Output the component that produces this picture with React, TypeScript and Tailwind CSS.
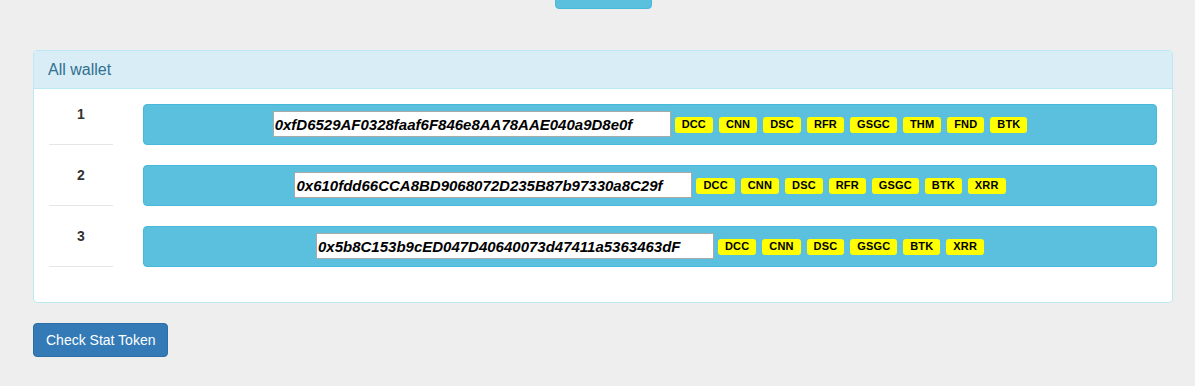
import React from 'react'

const wallets = [
  {
    address: '0xfD6529AF0328faaf6F846e8AA78AAE040a9D8e0f',
    tokens: ['DCC', 'CNN', 'DSC', 'RFR', 'GSGC', 'THM', 'FND', 'BTK'],
  },
  {
    address: '0x610fdd66CCA8BD9068072D235B87b97330a8C29f',
    tokens: ['DCC', 'CNN', 'DSC', 'RFR', 'GSGC', 'BTK', 'XRR'],
  },
  {
    address: '0x5b8C153b9cED047D40640073d47411a5363463dF',
    tokens: ['DCC', 'CNN', 'DSC', 'GSGC', 'BTK', 'XRR'],
  },
]

export default function App() {
  return (
    <div className="min-h-screen bg-[#eeeeee] font-['Liberation_Sans',Arial,sans-serif] text-[14px] text-[#333]">
      <div className="ml-[33px] w-[1140px]">
        {/* top button, mostly scrolled off */}
        <div className="flex justify-center">
          <button className="-mt-[25px] h-[34px] w-[97px] rounded-[4px] border border-[#46b8da] bg-[#5bc0de]" />
        </div>

        <div className="mt-[41px] rounded-[4px] border border-[#bce8f1] bg-white">
          <div className="h-[38px] rounded-t-[3px] border-b border-[#bce8f1] bg-[#d9edf7] px-[14px] text-[16px] leading-[37px] text-[#31708f]">
            All wallet
          </div>

          <div className="px-[15px] pt-[15px] pb-[15px]">
            {wallets.map((wallet, index) => {
              return (
                <div key={index} className="mb-5 flex gap-[30px]">
                  <div className="h-[41px] w-[64px] shrink-0 border-b border-[#e6e6e6] text-center font-bold leading-[20px]">
                    {index + 1}
                  </div>
                  <div className="flex h-[41px] flex-1 items-center justify-center rounded-[4px] border border-[#46b8da] bg-[#5bc0de]">
                    <input
                      readOnly
                      value={wallet.address}
                      className="-mt-px h-[26px] w-[398px] border border-[#a9a9a9] bg-white px-px text-[15px] font-bold italic text-black outline-none"
                    />
                    <div className="ml-[4px] flex gap-[6px]">
                      {wallet.tokens.map((token) => (
                        <span
                          key={token}
                          className="flex h-[16px] items-center rounded-[3px] bg-[#ffff00] px-[7px] text-[11px] leading-none font-bold tracking-[0.15px] text-black"
                        >
                          {token}
                        </span>
                      ))}
                    </div>
                  </div>
                </div>
              )
            })}
          </div>
        </div>

        <button className="mt-5 h-[34px] rounded-[4px] border border-[#2e6da4] bg-[#337ab7] px-[12px] text-[14px] text-white">
          Check Stat Token
        </button>
      </div>
    </div>
  )
}
